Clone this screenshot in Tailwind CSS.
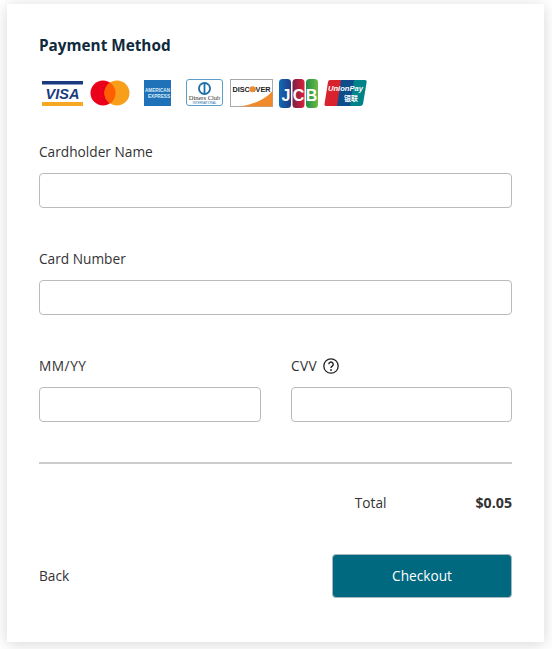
<!DOCTYPE html>
<html lang="en">
<head>
    <meta charset="UTF-8">
    <title>Payment Method</title>
    <script src="https://cdn.jsdelivr.net/npm/@tailwindcss/browser@4"></script>
</head>
<body class="bg-white font-['Open_Sans',sans-serif] text-[13.7px] text-[#333]">
    <div class="pt-[4px] pl-[7px] h-[649px] w-[552px] overflow-hidden">
        <!-- Card -->
        <div class="w-[537px] h-[638px] bg-white shadow-[0_2px_14px_rgba(0,0,0,0.16)] pt-[31px] px-[32px]">
            <h1 class="text-[15.3px] leading-[20px] font-bold text-[#0f2a3d]">Payment Method</h1>

            <!-- Card logos -->
            <div class="flex items-center mt-[23px] ml-[3px] h-[30px]">
                <svg width="42" height="26" viewBox="0 0 42 26">
                    <rect width="41" height="3.5" y="1" fill="#1a3a80"/>
                    <rect width="41" height="4" y="22" fill="#f7a823"/>
                    <text x="20.5" y="19" text-anchor="middle" font-family="Liberation Sans" font-weight="700" font-style="italic" font-size="14.5" fill="#1a3a80">VISA</text>
                </svg>
                <svg width="40" height="26" viewBox="0 0 40 26" class="ml-[6px]">
                    <circle cx="13" cy="13" r="12.5" fill="#eb001b"/>
                    <circle cx="27" cy="13" r="12.5" fill="#f79e1b"/>
                    <path d="M20 2.6a12.5 12.5 0 0 1 0 20.8a12.5 12.5 0 0 1 0-20.8z" fill="#ff5f00"/>
                </svg>
                <svg width="31" height="28" viewBox="0 0 31 28" class="ml-[12px]">
                    <rect x="2" y="1" width="27" height="26" fill="#1f72b8"/>
                    <text x="15.5" y="13" text-anchor="middle" textLength="25" lengthAdjust="spacingAndGlyphs" font-family="Liberation Sans" font-weight="700" font-size="5" fill="#dcebf6">AMERICAN</text>
                    <text x="17" y="18.5" text-anchor="middle" textLength="22" lengthAdjust="spacingAndGlyphs" font-family="Liberation Sans" font-weight="700" font-size="5" fill="#dcebf6">EXPRESS</text>
                </svg>
                <svg width="38" height="28" viewBox="0 0 38 28" class="ml-[13px]">
                    <rect x="0.5" y="0.5" width="36" height="26" rx="2.5" fill="#fff" stroke="#5d9ec9"/>
                    <circle cx="18.5" cy="9.5" r="6.5" fill="#1f6fa8"/>
                    <circle cx="18.5" cy="9.5" r="4.6" fill="#fff"/>
                    <rect x="17.6" y="5" width="1.8" height="9" fill="#1f6fa8"/>
                    <text x="18.5" y="21" text-anchor="middle" font-family="Liberation Serif" font-size="6.5" fill="#333">Diners Club</text>
                    <text x="18.5" y="25" text-anchor="middle" font-family="Liberation Sans" font-size="3" fill="#1f6fa8">INTERNATIONAL</text>
                </svg>
                <svg width="44" height="28" viewBox="0 0 44 28" class="ml-[6px]">
                    <rect x="0.5" y="0.5" width="42" height="27" fill="#fff" stroke="#aaa"/>
                    <path d="M10 27.5Q32 24 42.5 12V27.5Z" fill="#f08a2c"/>
                    <text x="21.5" y="13" text-anchor="middle" textLength="38" lengthAdjust="spacingAndGlyphs" font-family="Liberation Sans" font-weight="700" font-size="8" fill="#222">DISCOVER</text>
                    <circle cx="22.5" cy="10.2" r="3" fill="#f08a2c"/>
                </svg>
                <svg width="39" height="29" viewBox="0 0 39 29" class="ml-[5px]">
                    <defs>
                        <linearGradient id="jcbBlue" x1="0" x2="1" y1="0" y2="0"><stop offset="0" stop-color="#0f6cb5"/><stop offset="1" stop-color="#243a86"/></linearGradient>
                        <linearGradient id="jcbRed" x1="0" x2="1" y1="0" y2="0"><stop offset="0" stop-color="#7b2044"/><stop offset="1" stop-color="#d8213c"/></linearGradient>
                        <linearGradient id="jcbGreen" x1="0" x2="1" y1="0" y2="0"><stop offset="0" stop-color="#1f8f45"/><stop offset="1" stop-color="#6fbb45"/></linearGradient>
                    </defs>
                    <rect x="0" y="0" width="12" height="29" rx="3.5" fill="url(#jcbBlue)"/>
                    <rect x="13.5" y="0" width="12" height="29" rx="3.5" fill="url(#jcbRed)"/>
                    <rect x="27" y="0" width="12" height="29" rx="3.5" fill="url(#jcbGreen)"/>
                    <text x="7" y="22" text-anchor="middle" font-family="Liberation Sans" font-weight="700" font-size="16" fill="#fff">J</text>
                    <text x="19.5" y="22" text-anchor="middle" font-family="Liberation Sans" font-weight="700" font-size="16" fill="#fff">C</text>
                    <text x="32.5" y="22" text-anchor="middle" font-family="Liberation Sans" font-weight="700" font-size="16" fill="#fff">B</text>
                </svg>
                <svg width="44" height="28" viewBox="0 0 44 28" class="ml-[6px]">
                    <path d="M6 1H18L14 27H2Q0 27 0.5 25L4 3Q4.4 1 6 1Z" fill="#d8232f"/>
                    <path d="M17 1H31L27 27H13Z" fill="#0e4c8a"/>
                    <path d="M30 1H41Q43 1 42.7 3L39 25Q38.6 27 36 27H26Z" fill="#00848a"/>
                    <text x="21.5" y="11.5" text-anchor="middle" font-family="Liberation Sans" font-weight="700" font-style="italic" font-size="7.6" fill="#fff">UnionPay</text>
                    <text x="27" y="22" text-anchor="middle" font-family="Noto Sans CJK SC" font-weight="700" font-size="7" fill="#fff">银联</text>
                </svg>
            </div>

            <!-- Fields -->
            <label class="block mt-[34px] leading-[20px] text-[#333]">Cardholder Name</label>
            <div class="mt-[11px] h-[35px] border border-[#bbb] rounded-[4px]"></div>

            <label class="block mt-[41px] leading-[20px] text-[#333]">Card Number</label>
            <div class="mt-[11px] h-[35px] border border-[#bbb] rounded-[4px]"></div>

            <div class="grid grid-cols-[222px_221px] gap-x-[30px] mt-[41px]">
                <div>
                    <label class="block leading-[20px] tracking-[0.5px]">MM/YY</label>
                    <div class="mt-[11px] h-[35px] border border-[#bbb] rounded-[4px]"></div>
                </div>
                <div>
                    <label class="flex items-center gap-[6px] leading-[20px] tracking-[0.3px]">CVV
                        <svg width="16" height="16" viewBox="0 0 16 16" fill="none" stroke="#222">
                            <circle cx="8" cy="8" r="7.2" stroke-width="1.3"/>
                            <path d="M5.8 6.2a2.2 2.2 0 1 1 3.4 1.9c-.8.5-1.2.9-1.2 1.9" stroke-width="1.4"/>
                            <circle cx="8" cy="12" r=".9" fill="#222" stroke="none"/>
                        </svg>
                    </label>
                    <div class="mt-[11px] h-[35px] border border-[#bbb] rounded-[4px]"></div>
                </div>
            </div>

            <div class="mt-[40px] border-t-2 border-[#ccc]"></div>

            <!-- Total -->
            <div class="flex justify-end items-center mt-[29px] h-[20px]">
                <span>Total</span>
                <span class="ml-[89px] text-[14.2px] font-bold">$0.05</span>
            </div>

            <!-- Actions -->
            <div class="flex justify-between items-center mt-[41px]">
                <a class="leading-[20px]">Back</a>
                <button class="w-[180px] h-[44px] bg-[#00687f] border border-[#a9b8bf] rounded-[4px] text-white">Checkout</button>
            </div>
        </div>
    </div>
</body>
</html>
